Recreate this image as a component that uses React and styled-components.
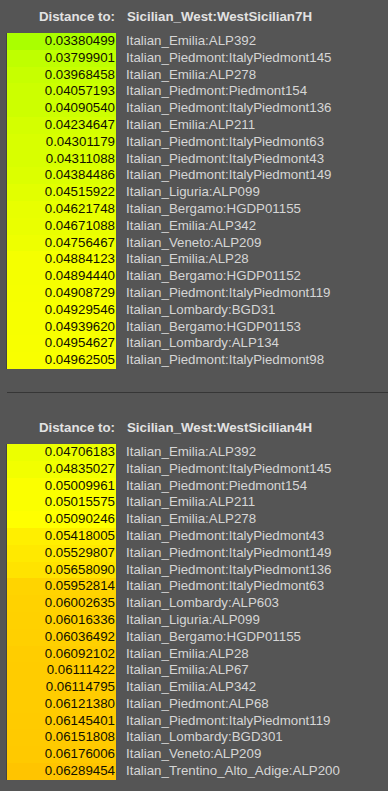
import React from "react";
import styled, { createGlobalStyle } from "styled-components";

const Global = createGlobalStyle`
  html, body { margin: 0; padding: 0; background: #555555; }
  body { font-family: "Liberation Sans", Arial, sans-serif; }
`;

const Page = styled.div`
  width: 388px;
  min-height: 791px;
  background: #555555;
  padding: 0 0 0 6px;
  box-sizing: border-box;
  font-size: 13.3px;
`;

const Section = styled.section`
  padding-top: ${(p) => p.$top}px;
`;

const Header = styled.div`
  display: grid;
  grid-template-columns: 110px 1fr;
  column-gap: 11px;
  line-height: 17px;
  height: 17px;
  margin-bottom: 8px;
  font-weight: bold;
  color: #e2e2e2;
  white-space: nowrap;
`;

const HeaderLabel = styled.div`
  text-align: right;
  padding-right: 1px;
`;

const Table = styled.div`
  display: grid;
  grid-template-columns: 110px 1fr;
  column-gap: 10px;
`;

const ValueCell = styled.div`
  height: 16.8px;
  line-height: 16.8px;
  border-left: 1px solid #444444;
  text-align: right;
  padding-right: 1px;
  color: #111100;
  white-space: nowrap;
`;

const NameCell = styled.div`
  height: 16.8px;
  line-height: 16.8px;
  color: #d6d6d6;
  white-space: nowrap;
`;

const Divider = styled.hr`
  margin: 23px 0 0 1px;
  border: 0;
  height: 1px;
  background: #363636;
`;

function colorFor(v) {
  let h = 80 - 1168 * (v - 0.0338);
  h = Math.max(0, Math.min(120, h));
  let r, g;
  if (h >= 60) {
    r = Math.round(255 * (1 - (h - 60) / 60));
    g = 255;
  } else {
    r = 255;
    g = Math.round((255 * h) / 60);
  }
  return `rgb(${r}, ${g}, 0)`;
}

const data1 = [
  ["0.03380499", "Italian_Emilia:ALP392"],
  ["0.03799901", "Italian_Piedmont:ItalyPiedmont145"],
  ["0.03968458", "Italian_Emilia:ALP278"],
  ["0.04057193", "Italian_Piedmont:Piedmont154"],
  ["0.04090540", "Italian_Piedmont:ItalyPiedmont136"],
  ["0.04234647", "Italian_Emilia:ALP211"],
  ["0.04301179", "Italian_Piedmont:ItalyPiedmont63"],
  ["0.04311088", "Italian_Piedmont:ItalyPiedmont43"],
  ["0.04384486", "Italian_Piedmont:ItalyPiedmont149"],
  ["0.04515922", "Italian_Liguria:ALP099"],
  ["0.04621748", "Italian_Bergamo:HGDP01155"],
  ["0.04671088", "Italian_Emilia:ALP342"],
  ["0.04756467", "Italian_Veneto:ALP209"],
  ["0.04884123", "Italian_Emilia:ALP28"],
  ["0.04894440", "Italian_Bergamo:HGDP01152"],
  ["0.04908729", "Italian_Piedmont:ItalyPiedmont119"],
  ["0.04929546", "Italian_Lombardy:BGD31"],
  ["0.04939620", "Italian_Bergamo:HGDP01153"],
  ["0.04954627", "Italian_Lombardy:ALP134"],
  ["0.04962505", "Italian_Piedmont:ItalyPiedmont98"],
];

const data2 = [
  ["0.04706183", "Italian_Emilia:ALP392"],
  ["0.04835027", "Italian_Piedmont:ItalyPiedmont145"],
  ["0.05009961", "Italian_Piedmont:Piedmont154"],
  ["0.05015575", "Italian_Emilia:ALP211"],
  ["0.05090246", "Italian_Emilia:ALP278"],
  ["0.05418005", "Italian_Piedmont:ItalyPiedmont43"],
  ["0.05529807", "Italian_Piedmont:ItalyPiedmont149"],
  ["0.05658090", "Italian_Piedmont:ItalyPiedmont136"],
  ["0.05952814", "Italian_Piedmont:ItalyPiedmont63"],
  ["0.06002635", "Italian_Lombardy:ALP603"],
  ["0.06016336", "Italian_Liguria:ALP099"],
  ["0.06036492", "Italian_Bergamo:HGDP01155"],
  ["0.06092102", "Italian_Emilia:ALP28"],
  ["0.06111422", "Italian_Emilia:ALP67"],
  ["0.06114795", "Italian_Emilia:ALP342"],
  ["0.06121380", "Italian_Piedmont:ALP68"],
  ["0.06145401", "Italian_Piedmont:ItalyPiedmont119"],
  ["0.06151808", "Italian_Lombardy:BGD301"],
  ["0.06176006", "Italian_Veneto:ALP209"],
  ["0.06289454", "Italian_Trentino_Alto_Adige:ALP200"],
];

function DistanceTable({ target, rows, top }) {
  return (
    <Section $top={top}>
      <Header>
        <HeaderLabel>Distance to:</HeaderLabel>
        <div>{target}</div>
      </Header>
      <Table>
        {rows.map(([v, name], i) => (
          <React.Fragment key={i}>
            <ValueCell style={{ background: colorFor(parseFloat(v)) }}>{v}</ValueCell>
            <NameCell>{name}</NameCell>
          </React.Fragment>
        ))}
      </Table>
    </Section>
  );
}

export default function App() {
  return (
    <>
      <Global />
      <Page>
        <DistanceTable target="Sicilian_West:WestSicilian7H" rows={data1} top={8} />
        <Divider />
        <DistanceTable target="Sicilian_West:WestSicilian4H" rows={data2} top={26} />
      </Page>
    </>
  );
}
